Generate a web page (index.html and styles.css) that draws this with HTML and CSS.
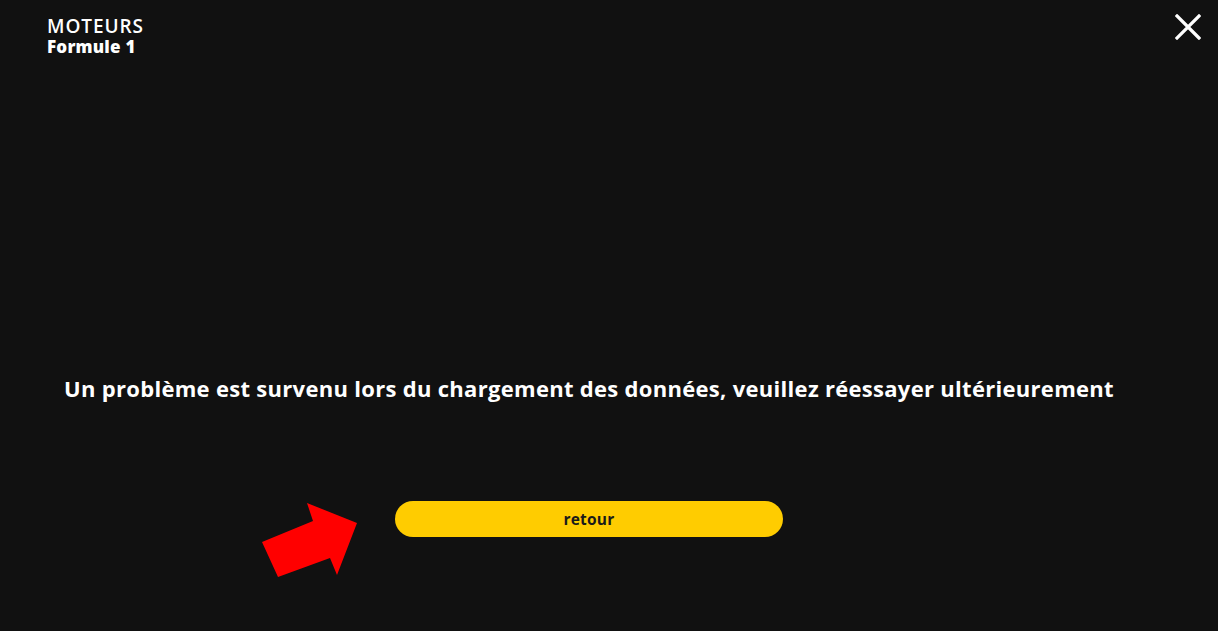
FILE: index.html
```html
<!DOCTYPE html>
<html lang="fr">
<head>
<meta charset="utf-8">
<title>Moteurs - Formule 1</title>
<link rel="stylesheet" href="styles.css">
</head>
<body>
<div class="page">
  <header class="header">
    <div class="title">
      <div class="title-main">MOTEURS</div>
      <div class="title-sub">Formule 1</div>
    </div>
    <button class="close" aria-label="Fermer">
      <svg width="26" height="26" viewBox="0 0 26 26"><path d="M2 2 L24 24 M24 2 L2 24" stroke="#fff" stroke-width="3.2" stroke-linecap="square" fill="none"/></svg>
    </button>
  </header>
  <main class="content">
    <p class="message">Un problème est survenu lors du chargement des données, veuillez réessayer ultérieurement</p>
    <button class="back">retour</button>
  </main>
  <svg class="arrow" width="1218" height="631" viewBox="0 0 1218 631"><polygon points="262,542 313,521 307,503 357,523 337,575 330,558 278,577" fill="#ff0000"/></svg>
</div>
</body>
</html>
```
FILE: styles.css
```css
* { box-sizing: border-box; }
html, body { margin: 0; padding: 0; }
body {
  background: #111111;
  color: #ffffff;
  font-family: "Open Sans", "Liberation Sans", sans-serif;
  width: 1218px;
  height: 631px;
  overflow: hidden;
}
.page {
  position: relative;
  height: 631px;
  display: flex;
  flex-direction: column;
}
.header {
  display: flex;
  justify-content: space-between;
  align-items: flex-start;
  padding: 14px 17px 0 47px;
}
.title-main {
  font-size: 19px;
  font-weight: 600;
  line-height: 24px;
  letter-spacing: 0.9px;
}
.title-sub {
  font-size: 17px;
  font-weight: 800;
  line-height: 18px;
  letter-spacing: 0.2px;
}
.close {
  background: none;
  border: 0;
  padding: 0;
  margin-top: 0;
  width: 26px;
  height: 26px;
  cursor: pointer;
}
.close svg { display: block; }
.content {
  display: flex;
  flex-direction: column;
  align-items: center;
  padding: 317px 40px 0 0;
}
.message {
  margin: 0;
  font-size: 22px;
  font-weight: 700;
  line-height: 30px;
  letter-spacing: 0.3px;
  text-align: center;
}
.back {
  margin-top: 98px;
  width: 388px;
  height: 36px;
  border: 0;
  border-radius: 18px;
  background: #ffcc00;
  color: #1a1a1a;
  font-family: "Open Sans", "Liberation Sans", sans-serif;
  font-size: 15.5px;
  font-weight: 700;
  letter-spacing: 0.2px;
  cursor: pointer;
}
.arrow {
  position: absolute;
  left: 0;
  top: 0;
  pointer-events: none;
}
```
